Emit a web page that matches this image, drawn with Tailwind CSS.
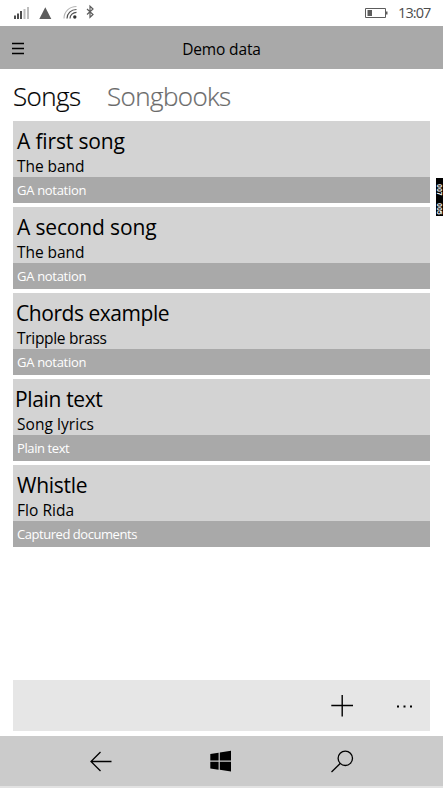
<!DOCTYPE html>
<html lang="en">
<head>
<meta charset="utf-8">
<title>Demo data</title>
<script src="https://cdn.jsdelivr.net/npm/@tailwindcss/browser@4"></script>
</head>
<body class="relative flex h-[788px] w-[443px] flex-col overflow-hidden bg-white font-['Open_Sans','Noto_Sans',sans-serif] text-black">
  <div class="flex h-[26px] shrink-0 items-center justify-between">
    <svg class="h-[26px] w-[110px]" viewBox="0 0 110 26" fill="none">
      <path d="M14 15.500h2V19h-2zM17 13.500h2V19h-2zM20 11h2v8h-2z" fill="#4d4d4d"/>
      <path d="M23.500 9h2v10h-2zM27 7h2v12h-2z" fill="#bdbdbd"/>
      <path d="M45.300 7.300 51.300 19H39.300z" fill="#5c5c5c"/>
      <path d="M64 18.500C64 11.500 69.500 6.500 76.500 6.500" stroke="#b5b5b5" stroke-width="1.100"/>
      <path d="M67 18.500c0-5 4-9 9.500-9M70 18.500c0-3.500 3-6.200 6.500-6.200" stroke="#505050" stroke-width="1.200"/>
      <circle cx="74.800" cy="17" r="1.700" fill="#333"/>
      <path d="M87 9l6 5.500-3 2.800V6.200L93 9l-6 5.500" stroke="#5c5c5c" stroke-width="1.200"/>
    </svg>
    <div class="flex items-center">
      <svg class="mr-[10px] h-[12px] w-[24px]" viewBox="0 0 24 12" fill="none"><path d="M1.500 1.500h20v9h-20z" stroke="#5c5c5c"/><path d="M22 4.500h1.500v3H22zM3.500 3h4.500v6H3.500z" fill="#5c5c5c"/></svg>
      <span class="w-[45px] text-[14.5px] leading-[26px] tracking-[-0.9px] text-[#4d4d4d]">13:07</span>
    </div>
  </div>
  <header class="grid h-[43px] shrink-0 grid-cols-[1fr_auto_1fr] items-center bg-[#a9a9a9]">
    <svg class="ml-[12px] mt-[2px] h-[13px] w-[12px]" viewBox="0 0 12 13"><path d="M0 1.500h12M0 6.500h12M0 11.500h12" stroke="#000" stroke-width="1.300"/></svg>
    <h1 class="pt-[4px] text-[15.5px] leading-[39px] tracking-[-0.15px]">Demo data</h1>
  </header>
  <nav class="flex h-[52px] shrink-0 gap-[26px] pl-[13px] pt-[9px] text-[26px] font-light leading-[36px] tracking-[-0.6px] [-webkit-text-stroke:0.2px]">
    <span class="w-[68px] whitespace-nowrap">Songs</span>
    <span class="whitespace-nowrap text-[#6a6a6a]">Songbooks</span>
  </nav>
  <main class="mx-[13px] flex flex-col gap-[4px]">
    <article class="h-[82px] bg-[#d3d3d3]"><h2 class="h-[34px] pl-[4px] pt-[6px] text-[21px] leading-[28px] tracking-[-0.15px]">A first song</h2><p class="h-[22px] pl-[4px] text-[15.5px] leading-[22px] tracking-[-0.05px]">The band</p><p class="h-[26px] bg-[#a9a9a9] pl-[4px] text-[13px] leading-[26px] tracking-[-0.3px] text-white">GA notation</p></article>
    <article class="h-[82px] bg-[#d3d3d3]"><h2 class="h-[34px] pl-[4px] pt-[6px] text-[21px] leading-[28px] tracking-[-0.15px]">A second song</h2><p class="h-[22px] pl-[4px] text-[15.5px] leading-[22px] tracking-[-0.05px]">The band</p><p class="h-[26px] bg-[#a9a9a9] pl-[4px] text-[13px] leading-[26px] tracking-[-0.3px] text-white">GA notation</p></article>
    <article class="h-[82px] bg-[#d3d3d3]"><h2 class="h-[34px] pl-[3px] pt-[6px] text-[21px] leading-[28px] tracking-[-0.45px]">Chords example</h2><p class="h-[22px] pl-[4px] text-[15.5px] leading-[22px] tracking-[-0.3px]">Tripple brass</p><p class="h-[26px] bg-[#a9a9a9] pl-[4px] text-[13px] leading-[26px] tracking-[-0.3px] text-white">GA notation</p></article>
    <article class="h-[82px] bg-[#d3d3d3]"><h2 class="h-[34px] pl-[2px] pt-[6px] text-[21px] leading-[28px] tracking-[-0.35px]">Plain text</h2><p class="h-[22px] pl-[4px] text-[15.5px] leading-[22px] tracking-[0.05px]">Song lyrics</p><p class="h-[26px] bg-[#a9a9a9] pl-[4px] text-[13px] leading-[26px] tracking-[-0.4px] text-white">Plain text</p></article>
    <article class="h-[82px] bg-[#d3d3d3]"><h2 class="h-[34px] pl-[4px] pt-[6px] text-[21px] leading-[28px] tracking-[-0.25px]">Whistle</h2><p class="h-[22px] pl-[4px] text-[15.5px] leading-[22px] tracking-[0.05px]">Flo Rida</p><p class="h-[26px] bg-[#a9a9a9] pl-[4px] text-[13px] leading-[26px] tracking-[-0.45px] text-white">Captured documents</p></article>
  </main>
  <div class="mx-[13px] mb-[5px] mt-auto flex h-[51px] shrink-0 items-center justify-end bg-[#e6e6e6] pr-[16px]">
    <svg class="mr-[42px] h-[24px] w-[24px]" viewBox="0 0 24 24"><path d="M1.300 11.500h21.700M12.200 1v21.500" stroke="#000" stroke-width="1.400"/></svg>
    <svg class="h-[4px] w-[18px]" viewBox="0 0 18 4"><path d="M1 1.500h2v2H1zM7.500 1.500h2v2h-2zM14 1.500h2v2h-2z"/></svg>
  </div>
  <footer class="h-[52px] shrink-0 border-b-2 border-[#e2e2e2] bg-[#cbcbcb]">
    <svg class="h-[50px] w-[443px]" viewBox="0 0 443 50" fill="none">
      <path d="M111.500 25.500H91M100.500 16 91 25.500l9.500 9.500" stroke="#000" stroke-width="1.300"/>
      <path d="M210.300 18l8.300-1.300V24.500h-8.300zM219.800 16.500 231 14.800V24.500h-11.200zM210.300 25.700h8.300v8l-8.300-1.300zM219.800 25.700H231v9.700l-11.200-1.700z" fill="#000"/>
      <circle cx="345.300" cy="22.300" r="7.200" stroke="#000" stroke-width="1.300"/><path d="M340.200 27.500 331.500 36" stroke="#000" stroke-width="1.300"/>
    </svg>
  </footer>
  <aside class="absolute right-0 top-[178px] flex h-[38px] w-[7px] items-center justify-between overflow-hidden bg-black pb-[1px] pt-[6px] font-['Liberation_Sans',sans-serif] text-[7px] font-bold leading-[7px] text-white [writing-mode:vertical-rl]"><span>007</span><span>005</span></aside>
</body>
</html>
